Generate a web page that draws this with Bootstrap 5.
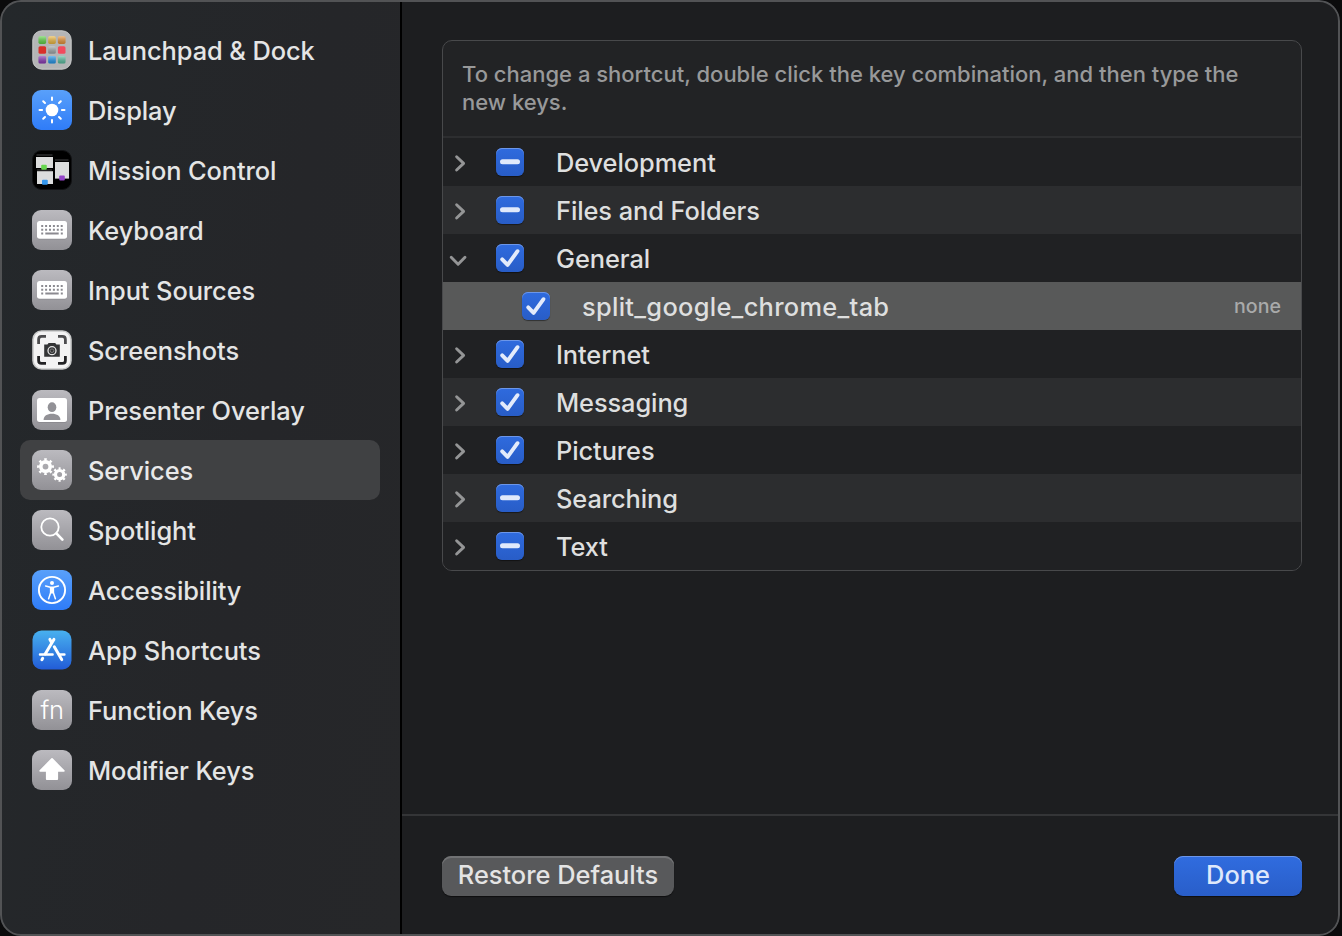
<!DOCTYPE html>
<html lang="en" data-bs-theme="dark">
<head>
<meta charset="utf-8">
<meta name="viewport" content="width=device-width, initial-scale=1">
<title>Keyboard Shortcuts</title>
<link href="https://cdn.jsdelivr.net/npm/bootstrap@5.3.0/dist/css/bootstrap.min.css" rel="stylesheet">
<style>
  body { background: #0b0b0c; font-family: Inter, "Liberation Sans", sans-serif; font-size: 25.4px; font-weight: 450; color: #e2e3e3; height: 936px; overflow: hidden; }
  .window { width: 1340px; height: 936px; border-radius: 21px; background: #1d1e20; position: relative; overflow: hidden; }
  .window::after { content: ""; position: absolute; inset: 0; border: 2px solid #525355; border-radius: 21px; pointer-events: none; }
  .side { width: 402px; padding: 20px 20px 0; border-right: 2px solid #000; background: linear-gradient(100deg, #24282b, #252629 60%, #262729); }
  .side .nav-link { height: 60px; padding: 0 12px; color: #e4e5e5; border-radius: 10px; gap: 16px; line-height: 1; white-space: nowrap; font-weight: 450; letter-spacing: -.08px; }
  .side .nav-link.active { background: #404143; color: #e9e9ea; }
  .side svg { width: 40px; height: 40px; flex: none; overflow: visible; }
  .side .nav-link span, .service span:not(.arrow) { padding-top: 1.5px; }
  .pane { padding: 40px 38px 0 40px; }
  .shortcuts { border: 1px solid #48494b; border-radius: 10px; background: #222325; overflow: hidden; }
  .hint { height: 97px; padding: 19px 19px 0; border-bottom: 2px solid #2d2e30; color: #98999a; font-size: 22px; line-height: 28px; letter-spacing: 0; }
  .service { height: 48px; padding-right: 20px; line-height: 1; background: #202123; color: #dedfdf; letter-spacing: -.08px; }
  .service.alt { background: #2c2d2f; }
  .service.picked { background: #585959; padding-left: 26px; letter-spacing: .3px; }
  .arrow { width: 53px; height: 48px; flex: none; }
  .tick { width: 28px; height: 28px; margin-right: 32px; flex: none; border-radius: 6px; background: linear-gradient(#2f6bde, #285dc7); box-shadow: inset 0 1px 0 #6c96e8, 0 1px 1px rgba(0,0,0,.45); }
  .key { font-size: 19.6px; color: #a9aaaa; letter-spacing: 0; }
  .foot { height: 122px; border-top: 2px solid #343537; padding: 40px 38px 0 40px; }
  .push { height: 40px; padding: 0; border: 0; border-radius: 9px; font-size: 25.4px; font-weight: 450; line-height: 37px; padding-bottom: 3px; color: #e4e4e4; background: #58595b; box-shadow: inset 0 2px 0 #717274, 0 1px 1px #0008; }
  .push.restore { width: 232px; }
  .push.done { width: 128px; color: #dfe8fb; background: linear-gradient(#306cdf, #295ec9); box-shadow: inset 0 1px 0 #6c96e8, 0 1px 1px #0008; }
</style>
</head>
<body>
<svg width="0" height="0" class="position-absolute" aria-hidden="true">
  <defs>
    <linearGradient id="gray" x2="0" y2="1"><stop stop-color="#bbbabf"/><stop offset="1" stop-color="#929196"/></linearGradient>
    <linearGradient id="blue" x2="0" y2="1"><stop stop-color="#59a0fa"/><stop offset="1" stop-color="#2f7cf8"/></linearGradient>
    <linearGradient id="store" x2="0" y2="1"><stop stop-color="#48b1ef"/><stop offset="1" stop-color="#225cd7"/></linearGradient>
    <linearGradient id="shade" x2="0" y2="1"><stop stop-color="#fff" stop-opacity=".38"/><stop offset="1" stop-color="#000" stop-opacity=".22"/></linearGradient>
    <symbol id="board" viewBox="0 0 40 40">
      <rect width="40" height="40" rx="9" fill="url(#gray)"/>
      <rect x="5" y="11.6" width="30" height="18" rx="2.5" fill="#77767b" opacity=".5"/>
      <rect x="5" y="11" width="30" height="17.8" rx="2.5" fill="#fff"/>
      <g stroke="#8b8a90" stroke-width="2" fill="none"><path d="M9.2 16H31" stroke-dasharray="2 1.9"/><path d="M9.2 19.8H31" stroke-dasharray="2 1.9"/><path d="M9.2 23.6h2M13.3 23.6h13.4M28.8 23.6h2"/></g>
    </symbol>
    <symbol id="check" viewBox="0 0 28 28"><path d="M6.2 15.3l5.4 5.6L21.5 7.2" fill="none" stroke="#e3ebfb" stroke-width="3.9" stroke-linecap="round" stroke-linejoin="round"/></symbol>
    <symbol id="dash" viewBox="0 0 28 28"><path d="M6.5 13.8h15" stroke="#e0e9fb" stroke-width="5" stroke-linecap="round"/></symbol>
    <symbol id="closed" viewBox="0 0 53 48"><path d="M13.6 18.8l7 6.6-7 6.6" fill="none" stroke="#949596" stroke-width="2.9" stroke-linecap="round" stroke-linejoin="round"/></symbol>
    <symbol id="opened" viewBox="0 0 53 48"><path d="M8.2 23.2l6.9 7 6.9-7" fill="none" stroke="#949596" stroke-width="2.9" stroke-linecap="round" stroke-linejoin="round"/></symbol>
  </defs>
</svg>

<div class="window d-flex">
  <nav class="side nav flex-column flex-nowrap flex-shrink-0">
    <a class="nav-link d-flex align-items-center">
      <svg viewBox="0 0 40 40"><rect x=".8" y=".8" width="38.4" height="38.4" rx="9" fill="#b4b5b6" stroke="#cbcccc"/>
        <g><rect x="6.5" y="6.3" width="7.6" height="7.6" rx="1.6" fill="#63d84c"/><rect x="16.2" y="6.3" width="7.6" height="7.6" rx="1.6" fill="#f2bd46"/><rect x="25.9" y="6.3" width="7.6" height="7.6" rx="1.6" fill="#ea963c"/>
        <rect x="6.5" y="16.2" width="7.6" height="7.6" rx="1.6" fill="#d9302a"/><rect x="16.2" y="16.2" width="7.6" height="7.6" rx="1.6" fill="#a4abae"/><rect x="25.9" y="16.2" width="7.6" height="7.6" rx="1.6" fill="#f24a5e"/>
        <rect x="6.5" y="26" width="7.6" height="7.6" rx="1.6" fill="#8b39b8"/><rect x="16.2" y="26" width="7.6" height="7.6" rx="1.6" fill="#2497ec"/><rect x="25.9" y="26" width="7.6" height="7.6" rx="1.6" fill="#5cc0a2"/></g>
        <g fill="url(#shade)"><rect x="6.5" y="6.3" width="7.6" height="7.6" rx="1.6"/><rect x="16.2" y="6.3" width="7.6" height="7.6" rx="1.6"/><rect x="25.9" y="6.3" width="7.6" height="7.6" rx="1.6"/><rect x="16.2" y="16.2" width="7.6" height="7.6" rx="1.6"/><rect x="6.5" y="26" width="7.6" height="7.6" rx="1.6"/><rect x="16.2" y="26" width="7.6" height="7.6" rx="1.6"/><rect x="25.9" y="26" width="7.6" height="7.6" rx="1.6"/></g></svg>
      <span>Launchpad &amp; Dock</span></a>
    <a class="nav-link d-flex align-items-center">
      <svg viewBox="0 0 40 40"><rect width="40" height="40" rx="9" fill="url(#blue)"/><circle cx="20" cy="20" r="6.3" fill="#fff"/>
        <g stroke="#fff" stroke-width="2" stroke-linecap="round"><path d="M20 7.5v2.6M20 29.9v2.6M7.5 20h2.6M29.9 20h2.6M11.2 11.2l1.8 1.8M27 27l1.8 1.8M28.8 11.2L27 13M13 27l-1.8 1.8"/></g></svg>
      <span>Display</span></a>
    <a class="nav-link d-flex align-items-center">
      <svg viewBox="0 0 40 40"><rect x=".5" y=".5" width="39" height="39" rx="9" fill="#000" stroke="#111214"/>
        <path d="M4.5 5h16M23 10h13.5M5 20h15" stroke="#444547" stroke-width="1"/>
        <g fill="#dcdddd"><rect x="4" y="7" width="17" height="11"/><rect x="5" y="21.2" width="16" height="12.8"/><rect x="23" y="12" width="14" height="16.6"/></g>
        <rect x="9.2" y="14.8" width="5.6" height="5" rx="1" fill="#66d64f"/><rect x="10" y="29.8" width="5.8" height="5" rx="1" fill="#3598ef"/><rect x="27.2" y="25.4" width="5.6" height="5.2" rx="1" fill="#9445c8"/></svg>
      <span>Mission Control</span></a>
    <a class="nav-link d-flex align-items-center"><svg><use href="#board"/></svg><span>Keyboard</span></a>
    <a class="nav-link d-flex align-items-center"><svg><use href="#board"/></svg><span>Input Sources</span></a>
    <a class="nav-link d-flex align-items-center">
      <svg viewBox="0 0 40 40"><rect x="1" y="1" width="38" height="38" rx="8.5" fill="#f3f3f3" stroke="#c9caca" stroke-width="1.6"/>
        <path d="M6.6 14V9.4q0-3 3-3H14M26 6.4h4.4q3 0 3 3V14" fill="none" stroke="#4c4c4e" stroke-width="2.8"/><path d="M33.4 26v4.4q0 3-3 3H26M14 33.4H9.6q-3 0-3-3V26" fill="none" stroke="#222224" stroke-width="2.8"/>
        <path d="M12.2 14.6h3.2l1.2-1.6h6.6l1.2 1.6h3.4v12.2H12.2z" fill="#343536"/><circle cx="20" cy="20.7" r="4" fill="#343536" stroke="#e5e5e5" stroke-width="1.3"/><circle cx="20" cy="20.7" r="1.8" fill="#333" stroke="#8b8b8b" stroke-width=".8"/></svg>
      <span>Screenshots</span></a>
    <a class="nav-link d-flex align-items-center">
      <svg viewBox="0 0 40 40"><rect width="40" height="40" rx="9" fill="url(#gray)"/><rect x="5" y="8.8" width="30" height="24" rx="2.5" fill="#77767b" opacity=".5"/><rect x="5" y="8" width="30" height="24" rx="2.5" fill="#fff"/>
        <ellipse cx="20" cy="17.2" rx="4.3" ry="4.9" fill="#929196"/><path d="M11.6 30c0-4 3.5-6.2 8.4-6.2s8.4 2.2 8.4 6.2z" fill="#929196"/></svg>
      <span>Presenter Overlay</span></a>
    <a class="nav-link active d-flex align-items-center">
      <svg viewBox="0 0 40 40"><rect width="40" height="40" rx="9" fill="url(#gray)"/>
        <g fill="none" stroke="#fff"><circle cx="13.5" cy="16.6" r="4.7" stroke-width="3.6"/><circle cx="13.5" cy="16.6" r="7.1" stroke-width="2.7" pathLength="16" stroke-dasharray=".9 1.1" stroke-dashoffset=".45"/>
        <circle cx="27.6" cy="24.6" r="4.1" stroke-width="3.2"/><circle cx="27.6" cy="24.6" r="6.1" stroke-width="2.3" pathLength="16" stroke-dasharray=".9 1.1" stroke-dashoffset=".45"/></g></svg>
      <span>Services</span></a>
    <a class="nav-link d-flex align-items-center">
      <svg viewBox="0 0 40 40"><rect width="40" height="40" rx="9" fill="url(#gray)"/><circle cx="18" cy="17" r="8.7" fill="none" stroke="#fff" stroke-width="1.8"/><path d="M24.4 23.4l6 6.2" stroke="#fff" stroke-width="2.7" stroke-linecap="round"/></svg>
      <span>Spotlight</span></a>
    <a class="nav-link d-flex align-items-center">
      <svg viewBox="0 0 40 40"><rect width="40" height="40" rx="9" fill="url(#blue)"/><circle cx="20" cy="20" r="13.1" fill="none" stroke="#fff" stroke-width="1.9"/><circle cx="20" cy="12.9" r="2" fill="#fff"/>
        <path d="M13.6 16l4.8 1.2h3.2l4.8-1.2M18.8 18.5l-.2 4.3-2 6M21.2 18.5l.2 4.3 2 6" fill="none" stroke="#fff" stroke-width="1.5" stroke-linecap="round" stroke-linejoin="round"/><path d="M17.8 16.9h4.4l-.2 6.5h-4z" fill="#fff"/></svg>
      <span>Accessibility</span></a>
    <a class="nav-link d-flex align-items-center">
      <svg viewBox="0 0 40 40"><rect x=".5" y=".5" width="39" height="39" rx="9" fill="url(#store)"/>
        <g fill="none" stroke="#fff" stroke-width="3" stroke-linecap="round"><path d="M21.9 9.4L13.2 24M17.9 9.4l1.7 3M22.3 16.8l7.4 12.8"/><path d="M8 24.6h12.6M27.6 24.6H32.4" stroke-width="2.5"/><path d="M10.7 28.3l-.8 1.4"/></g></svg>
      <span>App Shortcuts</span></a>
    <a class="nav-link d-flex align-items-center">
      <svg viewBox="0 0 40 40"><rect width="40" height="40" rx="9" fill="url(#gray)"/><text x="20.2" y="28.6" text-anchor="middle" font-size="25.5" font-weight="300" fill="#fff">fn</text></svg>
      <span>Function Keys</span></a>
    <a class="nav-link d-flex align-items-center">
      <svg viewBox="0 0 40 40"><rect width="40" height="40" rx="9" fill="url(#gray)"/><path d="M20 9L31.8 20.8H25.2V29H14.8V20.8H8.2z" fill="#fff" stroke="#fff" stroke-width="1.8" stroke-linejoin="round"/></svg>
      <span>Modifier Keys</span></a>
  </nav>

  <main class="d-flex flex-column flex-grow-1">
    <section class="pane flex-grow-1">
      <div class="shortcuts">
        <div class="hint">To change a shortcut, double click the key combination, and then type the<br>new keys.</div>
        <div class="service d-flex align-items-center"><svg class="arrow"><use href="#closed"/></svg><svg class="tick"><use href="#dash"/></svg><span>Development</span></div>
        <div class="service alt d-flex align-items-center"><svg class="arrow"><use href="#closed"/></svg><svg class="tick"><use href="#dash"/></svg><span>Files and Folders</span></div>
        <div class="service d-flex align-items-center"><svg class="arrow"><use href="#opened"/></svg><svg class="tick"><use href="#check"/></svg><span>General</span></div>
        <div class="service picked d-flex align-items-center"><span class="arrow"></span><svg class="tick"><use href="#check"/></svg><span>split_google_chrome_tab</span><span class="key ms-auto">none</span></div>
        <div class="service d-flex align-items-center"><svg class="arrow"><use href="#closed"/></svg><svg class="tick"><use href="#check"/></svg><span>Internet</span></div>
        <div class="service alt d-flex align-items-center"><svg class="arrow"><use href="#closed"/></svg><svg class="tick"><use href="#check"/></svg><span>Messaging</span></div>
        <div class="service d-flex align-items-center"><svg class="arrow"><use href="#closed"/></svg><svg class="tick"><use href="#check"/></svg><span>Pictures</span></div>
        <div class="service alt d-flex align-items-center"><svg class="arrow"><use href="#closed"/></svg><svg class="tick"><use href="#dash"/></svg><span>Searching</span></div>
        <div class="service d-flex align-items-center"><svg class="arrow"><use href="#closed"/></svg><svg class="tick"><use href="#dash"/></svg><span>Text</span></div>
      </div>
    </section>
    <footer class="foot d-flex justify-content-between align-items-start">
      <button type="button" class="btn push restore">Restore Defaults</button>
      <button type="button" class="btn push done">Done</button>
    </footer>
  </main>
</div>
<script src="https://cdn.jsdelivr.net/npm/bootstrap@5.3.0/dist/js/bootstrap.bundle.min.js"></script>
</body>
</html>
